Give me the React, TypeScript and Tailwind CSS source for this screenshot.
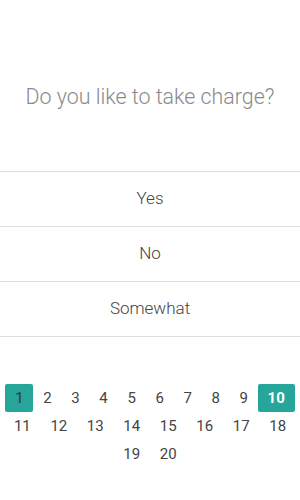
import React from "react";

export default function App() {
  const nums = Array.from({ length: 20 }, (_, i) => i + 1);
  return (
    <div className="w-[300px] h-[500px] bg-white overflow-hidden" style={{ fontFamily: "Roboto, sans-serif" }}>
      <div className="pt-[84px] pb-[61px] text-center text-[21.4px] leading-[26px] font-light text-[#8a8a8a]">
        Do you like to take charge?
      </div>
      <div className="border-t border-[#e0e0e0]">
        {["Yes", "No", "Somewhat"].map((t) => (
          <div key={t} className="h-[55px] border-b border-[#e0e0e0] flex items-center justify-center text-[17px] font-light text-[#444]">
            {t}
          </div>
        ))}
      </div>
      <div className="mt-[47px] flex flex-wrap justify-center">
        {nums.map((n) => {
          const first = n === 1;
          const sel = n === 10;
          return (
            <div
              key={n}
              className={
                "h-[28px] leading-[28px] px-[9.8px] text-[15px] rounded-[2px] " +
                (first
                  ? "bg-[#26a69a] text-[#333]"
                  : sel
                  ? "bg-[#26a69a] text-white font-bold"
                  : "text-[#444]")
              }
            >
              {n}
            </div>
          );
        })}
      </div>
    </div>
  );
}
